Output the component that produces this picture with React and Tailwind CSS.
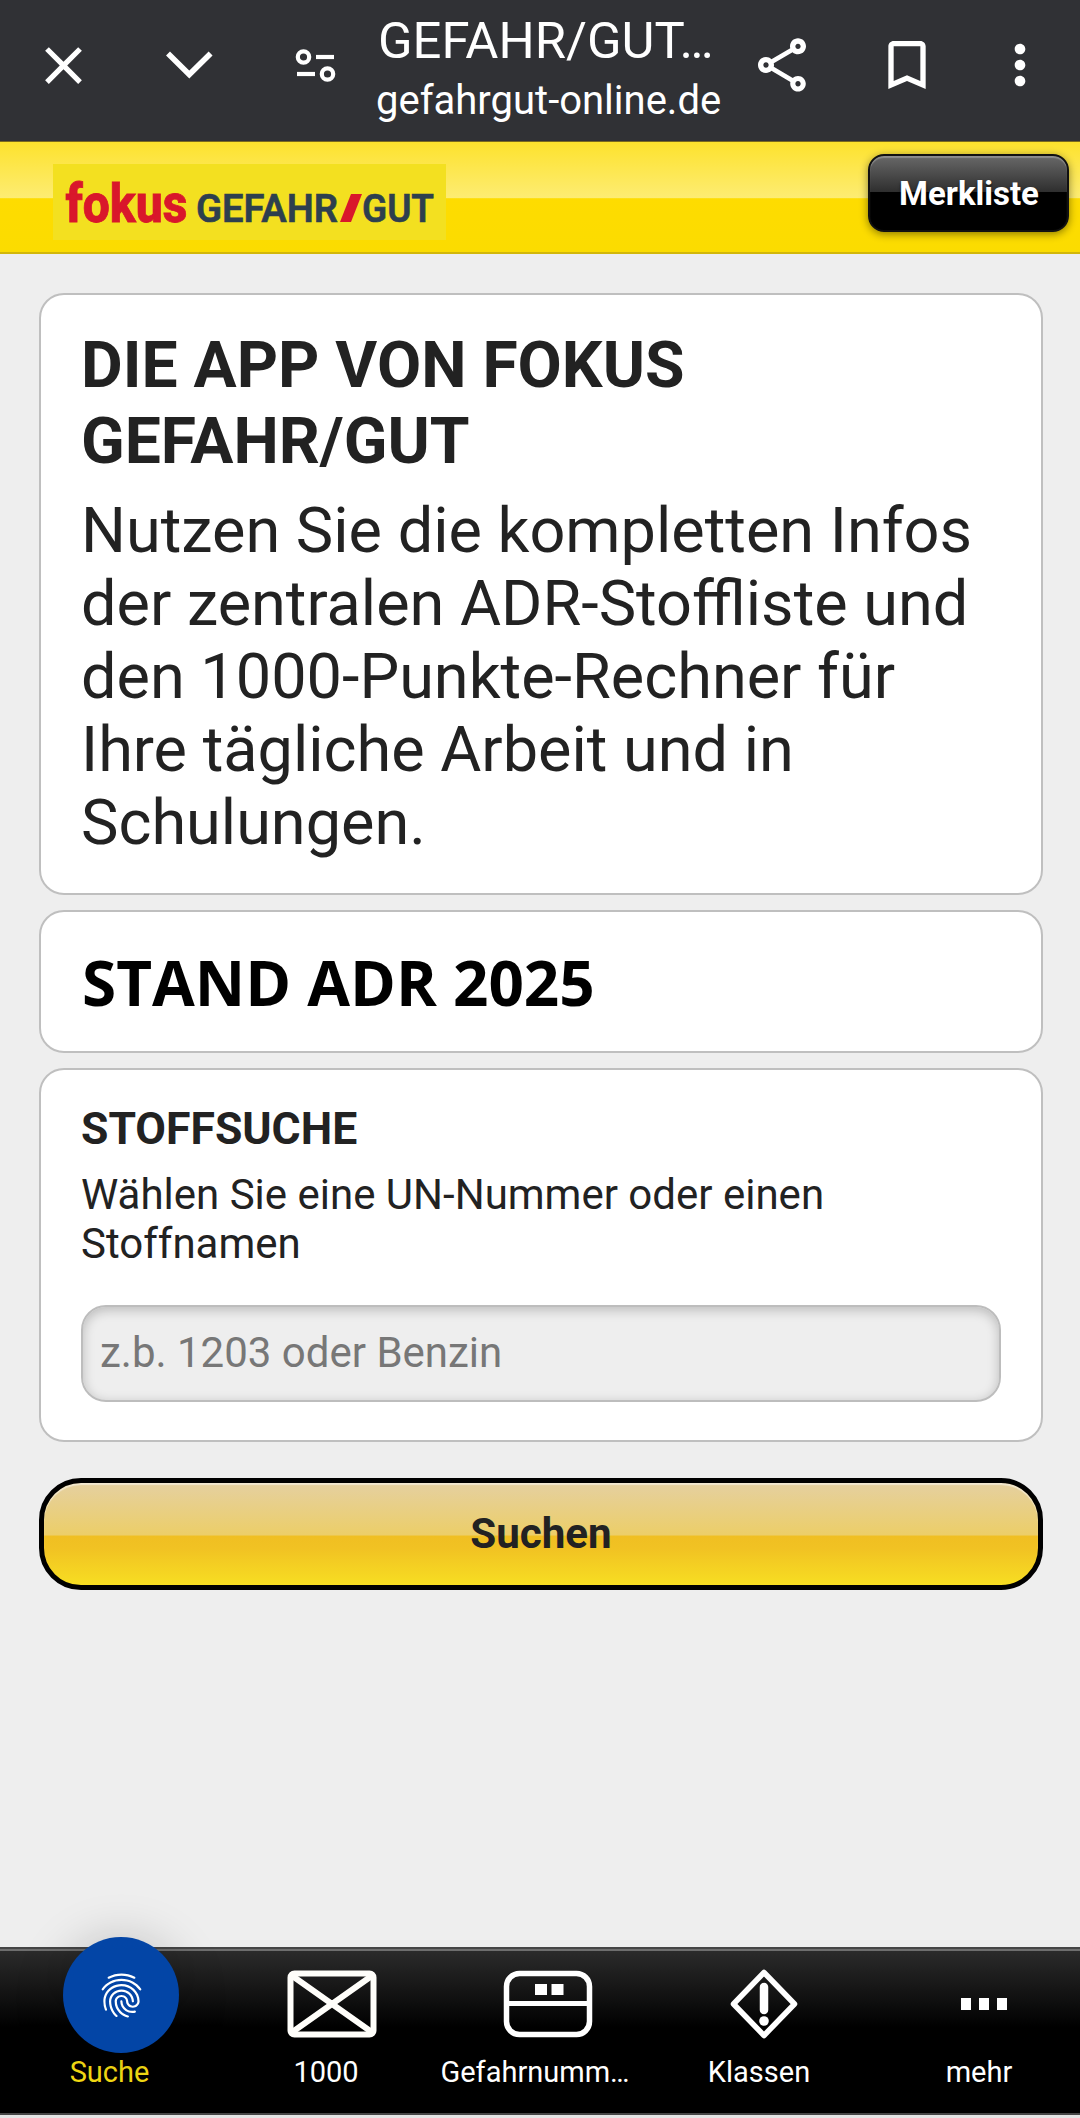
import React from 'react';
import { MdClose, MdFingerprint, MdMoreVert, MdOutlineShare, MdBookmarkBorder } from 'react-icons/md';

function BrowserBar() {
  return (
    <header className="flex h-[141px] shrink-0 items-start bg-[#303135] text-white">
      <MdClose className="ml-[32px] mt-[34px] size-[63px] shrink-0" />
      <svg className="ml-[67px] mt-[42px] h-[46px] w-[54px] shrink-0" viewBox="0 0 54 46" fill="none" stroke="currentColor" strokeWidth="5.6">
        <path d="M6 11.5 L27.3 32.5 L48.6 11.5" />
      </svg>
      <svg className="ml-[76px] mt-[44px] h-[42px] w-[50px] shrink-0" viewBox="0 0 50 42" fill="none" stroke="currentColor" strokeWidth="4.2">
        <circle cx="11.5" cy="13" r="5.7" />
        <path d="M24 13 H42" />
        <path d="M5 30 H23" />
        <circle cx="35.5" cy="30" r="5.7" />
      </svg>
      <div className="ml-[34px] w-[350px] shrink-0 whitespace-nowrap pt-[11px]">
        <div className="ml-[2px] text-[50.8px] leading-[59px]">GEFAHR/GUT…</div>
        <div className="mt-[5px] text-[40px] leading-[52px]">gefahrgut-online.de</div>
      </div>
      <MdOutlineShare className="ml-[24px] mt-[33px] size-[64px] shrink-0" />
      <MdBookmarkBorder className="ml-[61px] mt-[33px] size-[64px] shrink-0" />
      <MdMoreVert className="ml-[49px] mt-[33px] size-[64px] shrink-0" />
    </header>
  );
}

function BrandBar() {
  return (
    <div className="flex h-[113px] shrink-0 items-start justify-between border-b-2 border-[#d2b70a] bg-[linear-gradient(to_bottom,#fde22c_0%,#fdec72_51%,#fedc00_52%,#fbdc00_100%)] pl-[53px] pr-[11px] shadow-[inset_0_1px_0_#7a6a20]">
      <svg className="mt-[23px] h-[76px] w-[393px] bg-[#f3e020]" viewBox="0 0 393 76">
        <g fontFamily="Roboto, sans-serif">
          <text x="12.5" y="58" fontSize="53" fontWeight="800" fill="#d9172b" stroke="#d9172b" strokeWidth="0.8" textLength="122" lengthAdjust="spacingAndGlyphs">fokus</text>
          <text x="143" y="58" fontSize="39.5" fontWeight="600" fill="#2d3f4e" stroke="#2d3f4e" strokeWidth="0.6" textLength="142" lengthAdjust="spacingAndGlyphs">GEFAHR</text>
          <text x="309" y="58" fontSize="39.5" fontWeight="600" fill="#2d3f4e" stroke="#2d3f4e" strokeWidth="0.6" textLength="72" lengthAdjust="spacingAndGlyphs">GUT</text>
        </g>
        <path d="M287 58 H298 L309 30 H298 Z" fill="#d9172b" />
      </svg>
      <button className="mt-[13px] h-[78px] w-[201px] rounded-[16px] border-2 border-[#111] bg-[linear-gradient(to_bottom,#686868_0%,#2f2f2f_48%,#000_49%,#000_100%)] pl-px pt-[2px] text-[33px] font-bold leading-[40px] text-white shadow-[0_2px_8px_rgba(0,0,0,0.45),inset_0_2px_1px_rgba(255,255,255,0.25)] [text-shadow:0_2px_3px_rgba(0,0,0,0.8)]">
        Merkliste
      </button>
    </div>
  );
}

function Card({ className, children }) {
  return <section className={`rounded-[25px] border-2 border-[#bfbfbf] bg-white pl-[40px] pr-[40px] ${className}`}>{children}</section>;
}

function NavItem({ icon, label, iconClass, labelClass }) {
  return (
    <div className="flex w-[216px] flex-col items-center pt-[20px]">
      <div className={`flex h-[70px] items-center justify-center ${iconClass}`}>{icon}</div>
      <div className={`mt-[16px] whitespace-nowrap text-[29px] leading-[34px] [text-shadow:0_2px_2px_#000] ${labelClass}`}>{label}</div>
    </div>
  );
}

const crateIcon = (
  <svg className="h-[68px] w-[90px]" viewBox="0 0 90 68" fill="none" stroke="#fffefa">
    <rect x="3.5" y="3.5" width="83" height="61" rx="4" strokeWidth="6" />
    <path d="M4 5 L86 63 M86 5 L4 63" strokeWidth="6" />
  </svg>
);

const plateIcon = (
  <svg className="h-[68px] w-[90px]" viewBox="0 0 90 68" fill="none" stroke="#fff">
    <rect x="3.5" y="3.5" width="83" height="61" rx="13" strokeWidth="5.5" />
    <path d="M3.5 33.5 H86.5" strokeWidth="5" />
    <path d="M32 14 h12 v11 h-12 Z M48.5 14 h12 v11 h-12 Z" fill="#fff" stroke="none" />
  </svg>
);

const hazardIcon = (
  <svg className="h-[70px] w-[70px]" viewBox="0 0 70 70" fill="none" stroke="#fff">
    <path d="M35 3.5 L65.5 35 L35 66.5 L4.5 35 Z" strokeWidth="5.5" strokeLinejoin="round" />
    <path d="M35 18 V41" strokeWidth="8.5" strokeLinecap="round" />
    <circle cx="35" cy="52" r="4.8" fill="#fff" stroke="none" />
  </svg>
);

const moreIcon = (
  <div className="flex gap-[8px]">
    <span className="h-[12px] w-[10px] bg-white" />
    <span className="h-[12px] w-[10px] bg-white" />
    <span className="h-[12px] w-[10px] bg-white" />
  </div>
);

function BottomNav() {
  return (
    <nav className="relative flex h-[168px] shrink-0 border-y-[2px] border-[#454545] bg-[linear-gradient(to_bottom,#2c2c2c_0%,#000_48%)] text-white shadow-[inset_0_2px_0_#6e6e6e]">
      <NavItem icon={null} label="Suche" iconClass="" labelClass="pl-[3px] text-[#f5dc14]" />
      <NavItem icon={crateIcon} label="1000" iconClass="pl-[15px]" labelClass="pl-[4px]" />
      <NavItem icon={plateIcon} label="Gefahrnumm…" iconClass="pl-[15px]" labelClass="pr-[10px]" />
      <NavItem icon={hazardIcon} label="Klassen" iconClass="pl-[16px]" labelClass="pl-[6px]" />
      <NavItem icon={moreIcon} label="mehr" iconClass="pl-[24px]" labelClass="pl-[14px]" />
      <div className="absolute left-[63px] top-[-12px] flex size-[116px] items-center justify-center rounded-full bg-[#0345a6] shadow-[0_4px_50px_rgba(0,0,0,0.22)]">
        <MdFingerprint className="size-[53px]" />
      </div>
    </nav>
  );
}

export default function App() {
  return (
    <div className="flex h-[2118px] w-[1080px] flex-col overflow-hidden bg-[#eee] font-[Roboto,sans-serif] text-[#222]">
      <BrowserBar />
      <BrandBar />
      <main className="flex flex-1 flex-col gap-[15px] pl-[39px] pr-[37px] pt-[39px]">
        <Card className="h-[602px] pt-[32px]">
          <h1 className="text-[64.2px] font-bold leading-[76px]">DIE APP VON FOKUS<br />GEFAHR/GUT</h1>
          <p className="mt-[15px] whitespace-nowrap text-[63px] leading-[73px]">
            Nutzen Sie die kompletten Infos<br />
            der zentralen ADR-Stoffliste und<br />
            den 1000-Punkte-Rechner für<br />
            Ihre tägliche Arbeit und in<br />
            Schulungen.
          </p>
        </Card>
        <Card className="flex h-[143px] items-center">
          <h2 className="ml-px font-['Open_Sans',sans-serif] text-[62px] font-bold leading-[80px] text-black">STAND ADR 2025</h2>
        </Card>
        <Card className="h-[374px] pt-[33px]">
          <h2 className="text-[44.5px] font-bold leading-[52px]">STOFFSUCHE</h2>
          <p className="mt-[15px] whitespace-nowrap text-[42px] leading-[49px]">
            Wählen Sie eine UN-Nummer oder einen<br />Stoffnamen
          </p>
          <input
            className="mt-[37px] block h-[97px] w-[920px] rounded-[25px] border-2 border-[#bdbdbd] bg-[#eee] pb-[3px] pl-[17px] text-[42px] shadow-[inset_0_3px_12px_rgba(0,0,0,0.22)] outline-none placeholder:text-[#777]"
            placeholder="z.b. 1203 oder Benzin"
          />
        </Card>
        <button className="mt-[21px] h-[112px] rounded-[42px] border-[5px] border-black bg-[linear-gradient(to_bottom,#e5d0a0_0%,#ecce68_51%,#f0bf22_52%,#f1c223_64%,#f7de22_100%)] text-[42.1px] font-bold leading-[50px] shadow-[inset_0_2px_1px_rgba(255,255,255,0.5)]">
          Suchen
        </button>
      </main>
      <BottomNav />
      <div className="h-[3px] shrink-0 bg-[#e4e4e4]" />
    </div>
  );
}
